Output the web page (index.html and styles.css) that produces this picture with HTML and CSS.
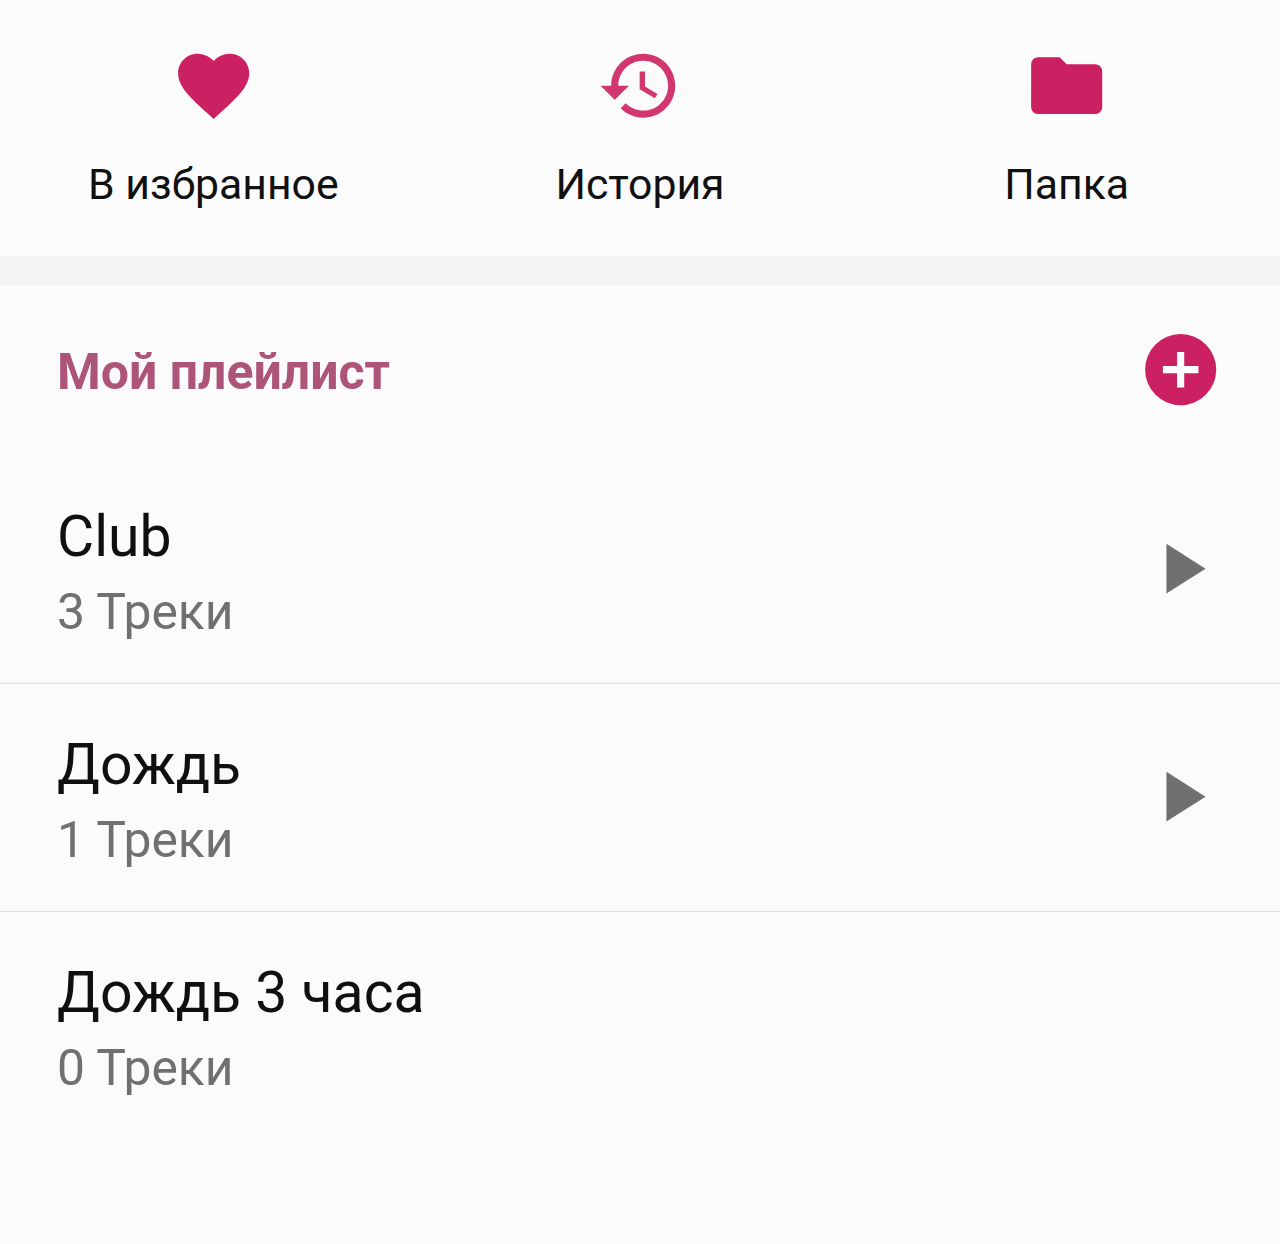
FILE: index.html
```html
<!DOCTYPE html>
<html lang="ru">
<head>
<meta charset="utf-8">
<title>Мой плейлист</title>
<link rel="stylesheet" href="styles.css">
</head>
<body>
<nav class="shortcuts">
  <a class="shortcut">
    <svg class="icon" viewBox="0 0 24 24"><path d="M12 21.35l-1.45-1.32C5.4 15.36 2 12.28 2 8.5 2 5.42 4.42 3 7.5 3c1.74 0 3.41.81 4.5 2.09C13.09 3.81 14.76 3 16.5 3 19.58 3 22 5.42 22 8.5c0 3.78-3.4 6.86-8.55 11.54L12 21.35z"/></svg>
    <span class="shortcut-label">В избранное</span>
  </a>
  <a class="shortcut">
    <svg class="icon icon-history" viewBox="0 0 24 24"><path d="M13 3c-4.97 0-9 4.03-9 9H1l3.89 3.89.07.14L9 12H6c0-3.87 3.13-7 7-7s7 3.13 7 7-3.13 7-7 7c-1.93 0-3.68-.79-4.94-2.06l-1.42 1.42C8.27 19.99 10.51 21 13 21c4.97 0 9-4.03 9-9s-4.03-9-9-9zm-1 5v5l4.28 2.54.72-1.21-3.5-2.08V8H12z"/></svg>
    <span class="shortcut-label">История</span>
  </a>
  <a class="shortcut">
    <svg class="icon" viewBox="0 0 24 24"><path d="M10 4H4c-1.1 0-1.99.9-1.99 2L2 18c0 1.1.9 2 2 2h16c1.1 0 2-.9 2-2V8c0-1.1-.9-2-2-2h-8l-2-2z"/></svg>
    <span class="shortcut-label">Папка</span>
  </a>
</nav>
<main>
  <header class="section-header">
    <h1 class="section-title">Мой плейлист</h1>
    <svg class="icon" viewBox="0 0 24 24"><circle cx="12" cy="12" r="10"/><path class="plus" d="M11 7h2v4h4v2h-4v4h-2v-4H7v-2h4z"/></svg>
  </header>
  <ul class="playlists">
    <li class="playlist">
      <div class="playlist-text">
        <span class="playlist-name">Club</span>
        <span class="playlist-count">3 Треки</span>
      </div>
      <svg class="icon icon-play" viewBox="0 0 24 24"><path d="M8 5v14l11-7z"/></svg>
    </li>
    <li class="playlist">
      <div class="playlist-text">
        <span class="playlist-name">Дождь</span>
        <span class="playlist-count">1 Треки</span>
      </div>
      <svg class="icon icon-play" viewBox="0 0 24 24"><path d="M8 5v14l11-7z"/></svg>
    </li>
    <li class="playlist">
      <div class="playlist-text">
        <span class="playlist-name">Дождь 3 часа</span>
        <span class="playlist-count">0 Треки</span>
      </div>
    </li>
  </ul>
</main>
</body>
</html>
```
FILE: styles.css
```css
* {
  box-sizing: border-box;
}

body {
  margin: 0;
  min-height: 1244px;
  background: #fbfbfb;
  color: #101010;
  font-family: Roboto, sans-serif;
}

.icon {
  display: block;
  flex: none;
  width: 85.33px;
  height: 85.33px;
  fill: #cb2061;
}

.icon-history {
  fill: #d2366f;
}

.icon-play {
  margin-bottom: 1.5px;
  fill: #707070;
}

.plus {
  fill: #fff;
}

.shortcuts {
  display: grid;
  grid-template-columns: repeat(3, 1fr);
  height: 285px;
  padding-top: 43px;
  border-bottom: 29px solid #f3f3f3;
}

.shortcut {
  display: flex;
  flex-direction: column;
  align-items: center;
  gap: 30.5px;
}

.shortcut-label {
  font-size: 42.75px;
  line-height: 50px;
}

.section-header {
  display: flex;
  align-items: center;
  justify-content: space-between;
  height: 171px;
  padding: 0 57px 2px;
}

.section-title {
  margin: 4px 0 0;
  color: #ad5578;
  font-size: 50px;
  line-height: 58px;
  font-weight: 700;
}

.playlists {
  margin: 0;
  padding: 0;
  list-style: none;
}

.playlist {
  display: flex;
  align-items: center;
  justify-content: space-between;
  height: 228px;
  padding: 0 57px;
  border-bottom: 1px solid #dedede;
}

.playlist:last-child {
  border-bottom-color: transparent;
}

.playlist-text {
  display: flex;
  flex-direction: column;
  gap: 13px;
  padding-top: 4px;
}

.playlist-name {
  font-size: 57.1px;
  line-height: 67px;
}

.playlist-count {
  color: #707070;
  font-size: 49.8px;
  line-height: 58px;
}
```
